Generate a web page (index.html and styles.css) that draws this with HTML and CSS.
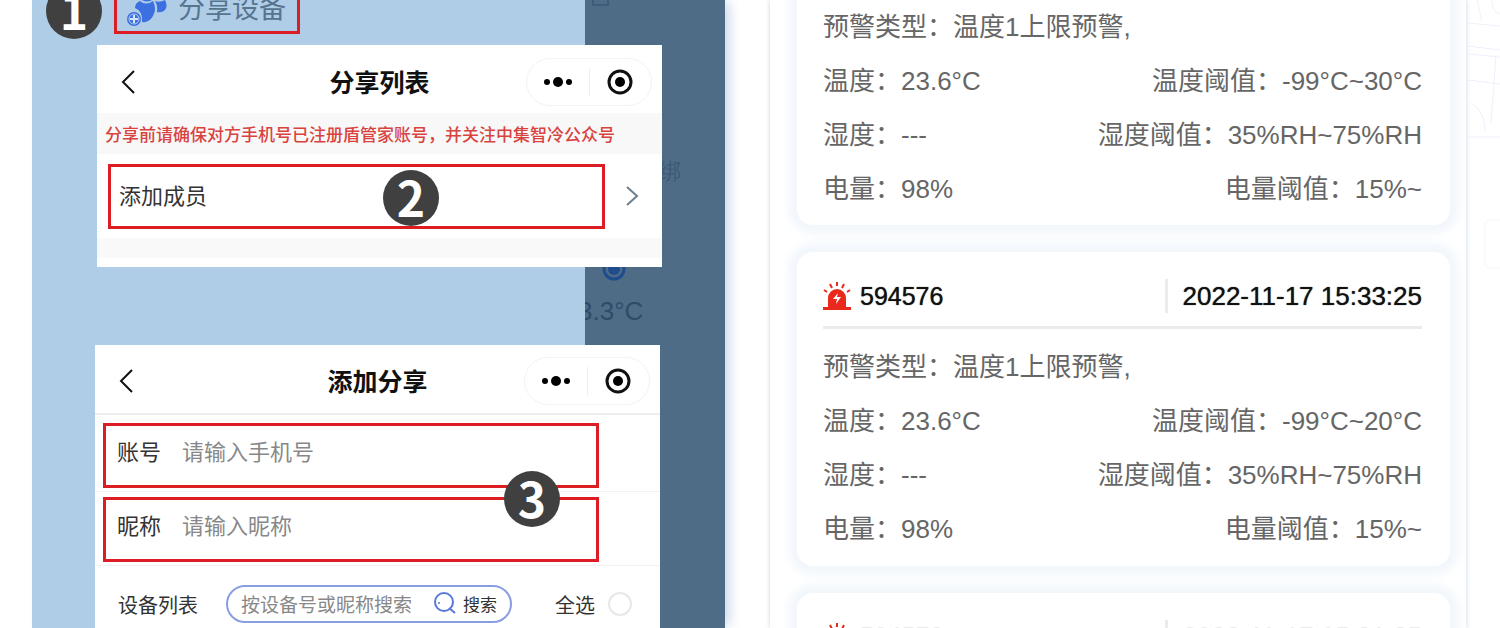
FILE: index.html
```html
<!doctype html>
<html lang="zh">
<head>
<meta charset="utf-8">
<title>分享设备</title>
<link rel="stylesheet" href="styles.css">
</head>

<body>
<svg class="bg_map" viewBox="0 0 32 300" aria-hidden="true">
	<g fill="none" stroke="#edf1fa" stroke-width="1">
		<path d="M0 23l32 3M9 0l5 22M0 46l32 4M0 54l32 3M0 80l32 4M0 137h32M28 55l-5 68M3 103q14 8 14 28M24 0q0 12 8 14"/>
		<rect x="17" y="220" width="30" height="48" rx="4" stroke="#f4f6fa"/>
	</g>
</svg>
<div class="wrap">
	<div class="phone share">
		<div class="screen">
			<div class="drawer">
				<span class="num num1">1</span>
				<button class="mark share_btn" type="button">
					<svg width="42" height="28" viewBox="0 0 42 28" aria-hidden="true">
						<g fill="#3c6fdf">
							<path d="M9 8Q9 3 14 1Q20 6 27 1Q31 9 27 16Q23 23 16 22Q17 11 9 8Z"/>
							<path d="M16 0H26Q21 3 16 0Z"/>
							<path d="M29 1Q34 3 39 0Q42 6 39 10Q36 13 31 12Q32 6 29 1Z"/>
							<circle cx="8" cy="19" r="7"/>
						</g>
						<circle cx="8" cy="19" r="5" fill="none" stroke="#b9d2ee" stroke-width="1"/>
						<path d="M8 15v8M4 19h8" stroke="#d5e5f8" stroke-width="2"/>
					</svg>
					<span>分享设备</span>
				</button>
			</div>
			<div class="dim">
				<i class="square"></i>
				<span class="bind">绑</span>
				<svg class="dot" width="24" height="24" viewBox="0 0 24 24" aria-hidden="true"><circle cx="12" cy="12" r="10" fill="none" stroke="#1f4c8c" stroke-width="3"/><circle cx="12" cy="12" r="6" fill="#1f4c8c"/></svg>
				<span class="temp">3.3°C</span>
			</div>
		</div>
		<div class="panels">
			<section class="panel list_panel">
				<header class="bar">
					<button class="back" type="button" aria-label="返回"><svg width="16" height="26" viewBox="0 0 16 26"><path d="M14 2L3 13L14 24" fill="none" stroke="#111" stroke-width="2"/></svg></button>
					<h2>分享列表</h2>
					<div class="capsule">
						<button type="button" aria-label="更多"><svg width="30" height="12" viewBox="0 0 30 12"><circle cx="4" cy="6" r="3"/><circle cx="15" cy="6" r="5"/><circle cx="26" cy="6" r="3"/></svg></button>
						<button type="button" aria-label="关闭"><svg width="28" height="28" viewBox="0 0 28 28"><circle cx="14" cy="14" r="11" fill="none" stroke="#111" stroke-width="3"/><circle cx="14" cy="14" r="5"/></svg></button>
					</div>
				</header>
				<p class="notice">分享前请确保对方手机号已注册盾管家账号，并关注中集智冷公众号</p>
				<div class="member">
					<button class="mark" type="button">添加成员</button>
					<svg width="14" height="22" viewBox="0 0 14 22" aria-hidden="true"><path d="M2 2L12 11L2 20" fill="none" stroke="#6d7f8e" stroke-width="2"/></svg>
					<span class="num num2">2</span>
				</div>
				<div class="band"></div>
			</section>

			<section class="panel add_panel">
				<header class="bar">
					<button class="back" type="button" aria-label="返回"><svg width="16" height="26" viewBox="0 0 16 26"><path d="M14 2L3 13L14 24" fill="none" stroke="#111" stroke-width="2"/></svg></button>
					<h2>添加分享</h2>
					<div class="capsule">
						<button type="button" aria-label="更多"><svg width="30" height="12" viewBox="0 0 30 12"><circle cx="4" cy="6" r="3"/><circle cx="15" cy="6" r="5"/><circle cx="26" cy="6" r="3"/></svg></button>
						<button type="button" aria-label="关闭"><svg width="28" height="28" viewBox="0 0 28 28"><circle cx="14" cy="14" r="11" fill="none" stroke="#111" stroke-width="3"/><circle cx="14" cy="14" r="5"/></svg></button>
					</div>
				</header>
				<div class="fields">
					<div class="field">
						<div class="mark">
							<label for="account">账号</label>
							<input id="account" type="text" placeholder="请输入手机号">
						</div>
					</div>
					<div class="field">
						<div class="mark">
							<label for="nick">昵称</label>
							<input id="nick" type="text" placeholder="请输入昵称">
						</div>
					</div>
					<span class="num num3">3</span>
				</div>
				<div class="devices">
					<label for="key">设备列表</label>
					<div class="search">
						<input id="key" type="text" placeholder="按设备号或昵称搜索">
						<button type="button"><svg width="24" height="24" viewBox="0 0 24 24" aria-hidden="true"><g fill="none" stroke="#5a78dc" stroke-width="2"><circle cx="11" cy="11" r="9"/><path d="M16 17l6 5"/></g><circle cx="6" cy="12" r="1" fill="#5a78dc"/></svg>搜索</button>
					</div>
					<label class="all">全选<input type="checkbox"></label>
				</div>
			</section>
		</div>
	</div>

	<div class="phone alarm">
		<article class="card card_cut">
			<p><span>预警类型：温度1上限预警,</span></p>
			<p><span>温度：23.6°C</span><span>温度阈值：-99°C~30°C</span></p>
			<p><span>湿度：---</span><span>湿度阈值：35%RH~75%RH</span></p>
			<p><span>电量：98%</span><span>电量阈值：15%~</span></p>
		</article>
		<article class="card">
			<header>
				<svg width="28" height="28" viewBox="0 0 28 28" aria-hidden="true">
					<path d="M5 25V16a9 9 0 0 1 18 0V25z" fill="#e8291c"/>
					<path d="M0 25h28v3H0z" fill="#e8291c"/>
					<path d="M1 8l3 2M7 2l2 4M14 0v4M21 2l-2 4M27 8l-3 2" stroke="#e8291c" stroke-width="2"/>
					<path d="M15 11l-5 6h4l-1 5l5-7h-4z" fill="#fff"/>
				</svg>
				<b>594576</b>
				<time>2022-11-17 15:33:25</time>
			</header>
			<p><span>预警类型：温度1上限预警,</span></p>
			<p><span>温度：23.6°C</span><span>温度阈值：-99°C~20°C</span></p>
			<p><span>湿度：---</span><span>湿度阈值：35%RH~75%RH</span></p>
			<p><span>电量：98%</span><span>电量阈值：15%~</span></p>
		</article>
		<article class="card">
			<header>
				<svg width="28" height="28" viewBox="0 0 28 28" aria-hidden="true">
					<path d="M5 25V16a9 9 0 0 1 18 0V25z" fill="#e8291c"/>
					<path d="M0 25h28v3H0z" fill="#e8291c"/>
					<path d="M1 8l3 2M7 2l2 4M14 0v4M21 2l-2 4M27 8l-3 2" stroke="#e8291c" stroke-width="2"/>
					<path d="M15 11l-5 6h4l-1 5l5-7h-4z" fill="#fff"/>
				</svg>
				<b>594576</b>
				<time>2022-11-17 15:31:25</time>
			</header>
		</article>
	</div>
</div>
</body>
</html>
```

FILE: styles.css
```css
*{ margin:0; padding:0; box-sizing:border-box;}
body{ position:relative; height:100vh; overflow:hidden; background:#fff; font-family:"Liberation Sans","Noto Sans CJK SC",sans-serif; color:#333;}
button,input{ border:0; background:none; font-family:inherit; color:inherit; outline:none;}
svg{ display:block; flex:none;}
.bg_map{ position:absolute; right:0; top:0; width:32px; height:300px;}

.wrap{ display:grid; grid-template-columns:693fr 696fr; grid-template-rows:100%; gap:45px; height:100%; padding:0 34px 0 32px;}
.phone{ min-width:0; min-height:0;}

/* left phone */
.share{ display:grid; grid-template:100% / 100%; box-shadow:6px 0 12px -2px #c9d7e9;}
.screen,.panels{ grid-area:1 / 1; min-width:0;}
.screen{ display:grid; grid-template-columns:553fr 140fr;}
.drawer{ position:relative; padding-left:82px; background:#b0cde8;}
.dim{ display:flex; flex-direction:column; align-items:flex-start; min-width:0; overflow:hidden; background:#4f6c87; color:#2f4b68;}
.square{ width:17px; height:6px; margin-left:7px; border:2px solid #3f5c7a; border-top:0;}
.bind{ width:100%; margin-top:150px; padding-left:74px; font-size:22px; line-height:32px; color:#3d5a78;}
.dot{ margin:69px 0 0 17px;}
.temp{ margin:14px 0 0 -7px; font-size:26px; line-height:32px;}

.mark{ display:flex; align-items:center; border:3px solid #dc1e24;}
.share_btn{ width:186px; height:34px; padding-left:9px; border-top:0; align-items:flex-start; gap:10px; font-size:27px; line-height:18px; color:#57748f; white-space:nowrap;}
.num{ position:absolute; width:56px; height:56px; border-radius:50%; background:#404040; color:#fff; text-align:center; font:bold 48px/52px "Noto Sans CJK SC",sans-serif;}
.num1{ left:14px; top:-17px;}
.num2{ left:286px; top:16px;}
.num3{ left:409px; top:56px;}

.panels{ padding:45px 63px 0; z-index:1; font-family:"Noto Sans CJK SC",sans-serif;}
.panel{ background:#fff;}
.list_panel{ margin-left:2px;}
.add_panel{ margin:78px 2px 0 0;}
.bar{ display:grid; grid-template-columns:1fr auto 1fr; align-items:center; height:68px; padding:6px 10px 0;}
.bar h2{ padding-bottom:2px; font-size:25px; line-height:36px; font-weight:bold; color:#111;}
.back{ justify-self:start; height:26px; margin-left:13px;}
.capsule{ justify-self:end; display:flex; align-items:center; width:126px; height:48px; border:1px solid #f3f3f3; border-radius:24px;}
.capsule button{ flex:1; height:28px; display:flex; align-items:center; justify-content:center;}
.capsule button+button{ border-left:1px solid #eee;}
.notice{ height:41px; padding-left:8px; background:#f8f8f8; font-size:17px; font-weight:500; line-height:42px; color:#d9433f; white-space:nowrap;}
.member{ position:relative; display:flex; align-items:center; gap:20px; height:84px; padding:0 23px 0 11px;}
.member .mark{ flex:1; height:65px; padding:0 0 4px 8px; font-size:22px;}
.band{ height:29px; border-bottom:9px solid #fff; background:#f9f9f9;}

.add_panel .bar{ height:70px; padding-top:4px; border-bottom:2px solid #eee;}
.fields{ position:relative; padding-top:3px;}
.field{ height:74px; padding:5px 61px 0 8px; border-bottom:1px solid #f2f2f2;}
.field .mark{ height:65px; padding:0 0 12px 11px;}
.field label{ width:65px; font-size:22px;}
.field input{ flex:1; min-width:0; font-size:22px;}
input::placeholder{ color:#888; opacity:1;}
.devices{ display:flex; align-items:center; height:76px; padding:0 28px 0 23px; font-size:20px; white-space:nowrap;}
.search{ display:flex; align-items:center; width:286px; height:38px; margin-left:28px; padding:0 13px 2px; border:2px solid #899ee0; border-radius:19px;}
.search input{ flex:1; min-width:0; font-size:19px;}
.search button{ display:flex; align-items:center; gap:6px; font-size:17px;}
.all{ display:flex; align-items:center; gap:13px; margin-left:auto;}
.all input{ appearance:none; width:24px; height:24px; border:2px solid #e8e8e8; border-radius:50%;}

/* right phone */
.alarm{ display:flex; flex-direction:column; gap:27px; padding:0 16px 0 27px; box-shadow:0 0 5px #c9d5e6;}
.card{ flex:none; padding:0 28px 10px 26px; border-radius:16px; background:#fff; box-shadow:0 0 10px 9px #f2f7fc;}
.card_cut{ border-radius:0 0 16px 16px; padding-bottom:9px;}
.card header{ display:flex; align-items:center; gap:9px; height:77px; margin-bottom:11px; padding-top:14px; border-bottom:3px solid #ebebeb; font-size:26px; color:#111;}
.card b{ font-size:25px; font-weight:normal;}
.card time{ margin-left:auto; padding-left:15px; border-left:3px solid #ebebeb; line-height:34px;}
.card p{ display:flex; justify-content:space-between; font-size:26px; line-height:54px; color:#666; white-space:nowrap;}
.card b,.card time{ text-shadow:0 0 1px #333;}
```
